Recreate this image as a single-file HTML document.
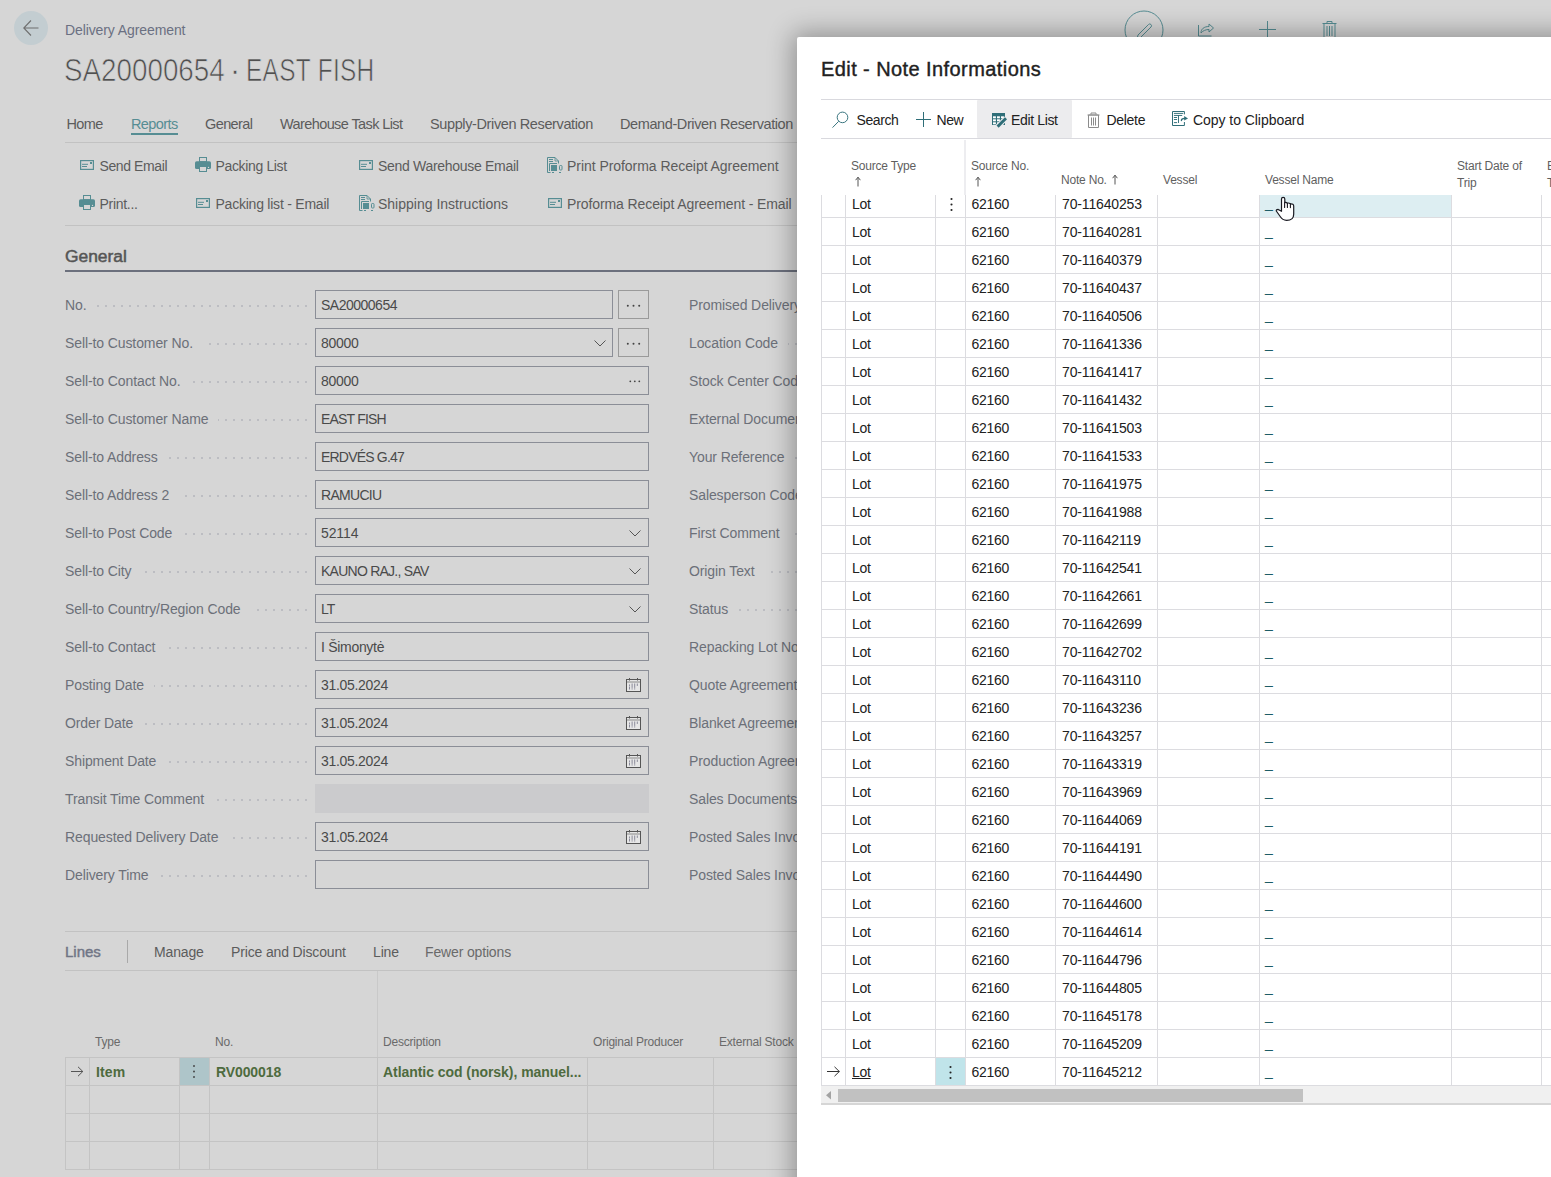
<!DOCTYPE html>
<html><head><meta charset="utf-8"><style>
html,body{margin:0;padding:0;width:1551px;height:1177px;overflow:hidden;background:#d6d6d6;font-family:"Liberation Sans",sans-serif;}
.t{position:absolute;white-space:nowrap;}
.r{position:absolute;}
.dots{background-image:radial-gradient(circle, #bcbdc2 0.8px, transparent 1.05px);background-size:8px 2px;background-position:right 0;background-repeat:repeat-x;}
.dlg{position:absolute;left:797px;top:37px;width:800px;height:1200px;background:#fff;border-radius:2px;box-shadow:0 0 26px 4px rgba(0,0,0,0.33);}
</style></head><body>
<div class="r" style="left:14px;top:11px;width:34px;height:34px;border-radius:50%;background:#c3cdd1"></div>
<svg class="r" style="left:22px;top:19px" width="18" height="18" viewBox="0 0 18 18"><path d="M9 1.5 L1.8 9 L9 16.5 M1.8 9 H16.5" fill="none" stroke="#6f6f6f" stroke-width="1.1"/></svg>
<div class="t" style="left:65px;top:23.35px;font-size:14px;line-height:14px;color:#6b7082;font-weight:normal;letter-spacing:-0.1px;">Delivery Agreement</div>
<div class="t" style="left:64.2px;top:55.18px;font-size:30.5px;line-height:30.5px;color:#505050;font-weight:normal;letter-spacing:0px;transform-origin:0 0;transform:scaleX(0.911);-webkit-text-stroke:0.7px #d6d6d6;">SA20000654</div>
<div class="t" style="left:230px;top:55.18px;font-size:30.5px;line-height:30.5px;color:#505050;font-weight:normal;letter-spacing:0px;-webkit-text-stroke:0.5px #d6d6d6;">·</div>
<div class="t" style="left:245.8px;top:55.18px;font-size:30.5px;line-height:30.5px;color:#505050;font-weight:normal;letter-spacing:0.4px;transform-origin:0 0;transform:scaleX(0.80);-webkit-text-stroke:0.7px #d6d6d6;">EAST FISH</div>
<div class="t" style="left:66.5px;top:116.93px;font-size:14.5px;line-height:14.5px;color:#5c5c5c;font-weight:normal;letter-spacing:-0.6px;">Home</div>
<div class="t" style="left:131px;top:116.93px;font-size:14.5px;line-height:14.5px;color:#568d93;font-weight:normal;letter-spacing:-0.6px;">Reports</div>
<div class="t" style="left:205px;top:116.93px;font-size:14.5px;line-height:14.5px;color:#5c5c5c;font-weight:normal;letter-spacing:-0.6px;">General</div>
<div class="t" style="left:280px;top:116.93px;font-size:14.5px;line-height:14.5px;color:#5c5c5c;font-weight:normal;letter-spacing:-0.6px;">Warehouse Task List</div>
<div class="t" style="left:430px;top:116.93px;font-size:14.5px;line-height:14.5px;color:#5c5c5c;font-weight:normal;letter-spacing:-0.38px;">Supply-Driven Reservation</div>
<div class="t" style="left:620px;top:116.93px;font-size:14.5px;line-height:14.5px;color:#5c5c5c;font-weight:normal;letter-spacing:-0.4px;">Demand-Driven Reservation</div>
<div class="r" style="left:131px;top:133px;width:47px;height:2px;background:#568d93"></div>
<div class="r" style="left:65px;top:142px;width:740px;height:1px;background:#c2c2c2"></div>
<svg class="r" style="left:80px;top:160px" width="14" height="10" viewBox="0 0 14 10"><rect x="0.6" y="0.6" width="12.8" height="8.8" fill="none" stroke="#568d93" stroke-width="1.2"/><path d="M2 4.3h6M2 6.5h5" stroke="#568d93" stroke-width="1"/><rect x="10" y="2" width="2" height="2" fill="#568d93"/></svg>
<div class="t" style="left:99.5px;top:159.15px;font-size:14px;line-height:14px;color:#5c5c5c;font-weight:normal;letter-spacing:-0.4px;">Send Email</div>
<svg class="r" style="left:195px;top:157px" width="16" height="15" viewBox="0 0 16 15"><rect x="4.5" y="0.5" width="7" height="4.2" fill="none" stroke="#568d93"/><rect x="0" y="4.2" width="16" height="7.8" rx="1.6" fill="#568d93"/><rect x="4.5" y="9.5" width="7" height="5" fill="#d6d6d6" stroke="#568d93"/><circle cx="13.5" cy="10.4" r="0.7" fill="#d6d6d6"/></svg>
<div class="t" style="left:215.5px;top:159.15px;font-size:14px;line-height:14px;color:#5c5c5c;font-weight:normal;letter-spacing:-0.35px;">Packing List</div>
<svg class="r" style="left:359px;top:160px" width="14" height="10" viewBox="0 0 14 10"><rect x="0.6" y="0.6" width="12.8" height="8.8" fill="none" stroke="#568d93" stroke-width="1.2"/><path d="M2 4.3h6M2 6.5h5" stroke="#568d93" stroke-width="1"/><rect x="10" y="2" width="2" height="2" fill="#568d93"/></svg>
<div class="t" style="left:378px;top:159.15px;font-size:14px;line-height:14px;color:#5c5c5c;font-weight:normal;letter-spacing:-0.3px;">Send Warehouse Email</div>
<svg class="r" style="left:547px;top:157px" width="16" height="16" viewBox="0 0 16 16"><path d="M3.5 15.5H0.5V0.5H8L11.5 4V6.5" fill="none" stroke="#568d93"/><path d="M8 0.5V4H11.5" fill="none" stroke="#568d93" stroke-width="0.8"/><path d="M2 2.5h4M2 4.5h4" stroke="#568d93"/><path d="M2.5 14V6.5H10" fill="none" stroke="#568d93"/><rect x="4" y="8" width="6" height="6" fill="#568d93"/><rect x="12.5" y="8.5" width="2.5" height="4.5" rx="0.8" fill="none" stroke="#568d93"/><path d="M5 15.5h2M12 15.5h2" stroke="#568d93"/></svg>
<div class="t" style="left:567px;top:159.15px;font-size:14px;line-height:14px;color:#5c5c5c;font-weight:normal;letter-spacing:-0.05px;">Print Proforma Receipt Agreement</div>
<svg class="r" style="left:79px;top:195px" width="16" height="15" viewBox="0 0 16 15"><rect x="4.5" y="0.5" width="7" height="4.2" fill="none" stroke="#568d93"/><rect x="0" y="4.2" width="16" height="7.8" rx="1.6" fill="#568d93"/><rect x="4.5" y="9.5" width="7" height="5" fill="#d6d6d6" stroke="#568d93"/><circle cx="13.5" cy="10.4" r="0.7" fill="#d6d6d6"/></svg>
<div class="t" style="left:99.5px;top:196.95px;font-size:14px;line-height:14px;color:#5c5c5c;font-weight:normal;letter-spacing:-0.3px;">Print...</div>
<svg class="r" style="left:196px;top:198px" width="14" height="10" viewBox="0 0 14 10"><rect x="0.6" y="0.6" width="12.8" height="8.8" fill="none" stroke="#568d93" stroke-width="1.2"/><path d="M2 4.3h6M2 6.5h5" stroke="#568d93" stroke-width="1"/><rect x="10" y="2" width="2" height="2" fill="#568d93"/></svg>
<div class="t" style="left:215.5px;top:196.95px;font-size:14px;line-height:14px;color:#5c5c5c;font-weight:normal;letter-spacing:-0.23px;">Packing list - Email</div>
<svg class="r" style="left:359px;top:195px" width="16" height="16" viewBox="0 0 16 16"><path d="M3.5 15.5H0.5V0.5H8L11.5 4V6.5" fill="none" stroke="#568d93"/><path d="M8 0.5V4H11.5" fill="none" stroke="#568d93" stroke-width="0.8"/><path d="M2 2.5h4M2 4.5h4" stroke="#568d93"/><path d="M2.5 14V6.5H10" fill="none" stroke="#568d93"/><rect x="4" y="8" width="6" height="6" fill="#568d93"/><rect x="12.5" y="8.5" width="2.5" height="4.5" rx="0.8" fill="none" stroke="#568d93"/><path d="M5 15.5h2M12 15.5h2" stroke="#568d93"/></svg>
<div class="t" style="left:378px;top:196.95px;font-size:14px;line-height:14px;color:#5c5c5c;font-weight:normal;letter-spacing:0px;">Shipping Instructions</div>
<svg class="r" style="left:548px;top:198px" width="14" height="10" viewBox="0 0 14 10"><rect x="0.6" y="0.6" width="12.8" height="8.8" fill="none" stroke="#568d93" stroke-width="1.2"/><path d="M2 4.3h6M2 6.5h5" stroke="#568d93" stroke-width="1"/><rect x="10" y="2" width="2" height="2" fill="#568d93"/></svg>
<div class="t" style="left:567px;top:196.95px;font-size:14px;line-height:14px;color:#5c5c5c;font-weight:normal;letter-spacing:-0.1px;">Proforma Receipt Agreement - Email</div>
<div class="r" style="left:65px;top:225px;width:740px;height:1px;background:#c2c2c2"></div>
<div class="t" style="left:65px;top:248.27px;font-size:17.4px;line-height:17.4px;color:#555;font-weight:normal;letter-spacing:0px;-webkit-text-stroke:0.5px #555;">General</div>
<div class="r" style="left:65px;top:270px;width:740px;height:2px;background:#6c707d"></div>
<div class="r dots" style="left:97px;top:305px;width:213px;height:2px"></div>
<div class="t" style="left:65px;top:297.75px;font-size:14px;line-height:14px;color:#6c7079;font-weight:normal;letter-spacing:-0.1px;background:#d6d6d6;padding-right:10px;">No.</div>
<div class="r" style="left:315px;top:290px;width:298px;height:29px;border:1px solid #8b8e97;box-sizing:border-box"></div>
<div class="t" style="left:321px;top:297.95px;font-size:14px;line-height:14px;color:#4a4a4a;font-weight:normal;letter-spacing:-0.5px;">SA20000654</div>
<div class="r" style="left:618px;top:290px;width:31px;height:29px;border:1px solid #9a9a9a;box-sizing:border-box"></div>
<svg class="r" style="left:626px;top:303.5px" width="15" height="4"><circle cx="1.8" cy="1.8" r="1" fill="#444"/><circle cx="7.5" cy="1.8" r="1" fill="#444"/><circle cx="13.2" cy="1.8" r="1" fill="#444"/></svg>
<div class="r dots" style="left:700px;top:305px;width:100px;height:2px;background-position:4px 0"></div>
<div class="t" style="left:689px;top:297.75px;font-size:14px;line-height:14px;color:#6c7079;font-weight:normal;letter-spacing:-0.1px;background:#d6d6d6;padding-right:10px;">Promised Delivery Date</div>
<div class="r dots" style="left:97px;top:343px;width:213px;height:2px"></div>
<div class="t" style="left:65px;top:335.75px;font-size:14px;line-height:14px;color:#6c7079;font-weight:normal;letter-spacing:-0.1px;background:#d6d6d6;padding-right:10px;">Sell-to Customer No.</div>
<div class="r" style="left:315px;top:328px;width:298px;height:29px;border:1px solid #8b8e97;box-sizing:border-box"></div>
<div class="t" style="left:321px;top:335.95px;font-size:14px;line-height:14px;color:#4a4a4a;font-weight:normal;letter-spacing:-0.3px;">80000</div>
<div class="r" style="left:618px;top:328px;width:31px;height:29px;border:1px solid #9a9a9a;box-sizing:border-box"></div>
<svg class="r" style="left:626px;top:341.5px" width="15" height="4"><circle cx="1.8" cy="1.8" r="1" fill="#444"/><circle cx="7.5" cy="1.8" r="1" fill="#444"/><circle cx="13.2" cy="1.8" r="1" fill="#444"/></svg>
<svg class="r" style="left:594px;top:340px" width="13" height="8"><path d="M0.5 0.5 L6 6 L11.5 0.5" fill="none" stroke="#555" stroke-width="1"/></svg>
<div class="r dots" style="left:700px;top:343px;width:100px;height:2px;background-position:4px 0"></div>
<div class="t" style="left:689px;top:335.75px;font-size:14px;line-height:14px;color:#6c7079;font-weight:normal;letter-spacing:-0.1px;background:#d6d6d6;padding-right:10px;">Location Code</div>
<div class="r dots" style="left:97px;top:381px;width:213px;height:2px"></div>
<div class="t" style="left:65px;top:373.75px;font-size:14px;line-height:14px;color:#6c7079;font-weight:normal;letter-spacing:-0.1px;background:#d6d6d6;padding-right:10px;">Sell-to Contact No.</div>
<div class="r" style="left:315px;top:366px;width:334px;height:29px;border:1px solid #8b8e97;box-sizing:border-box"></div>
<div class="t" style="left:321px;top:373.95px;font-size:14px;line-height:14px;color:#4a4a4a;font-weight:normal;letter-spacing:-0.3px;">80000</div>
<svg class="r" style="left:629px;top:380px" width="12" height="3"><circle cx="1.3" cy="1.3" r="0.9" fill="#444"/><circle cx="5.8" cy="1.3" r="0.9" fill="#444"/><circle cx="10.3" cy="1.3" r="0.9" fill="#444"/></svg>
<div class="r dots" style="left:700px;top:381px;width:100px;height:2px;background-position:4px 0"></div>
<div class="t" style="left:689px;top:373.75px;font-size:14px;line-height:14px;color:#6c7079;font-weight:normal;letter-spacing:-0.1px;background:#d6d6d6;padding-right:10px;">Stock Center Code</div>
<div class="r dots" style="left:97px;top:419px;width:213px;height:2px"></div>
<div class="t" style="left:65px;top:411.75px;font-size:14px;line-height:14px;color:#6c7079;font-weight:normal;letter-spacing:-0.1px;background:#d6d6d6;padding-right:10px;">Sell-to Customer Name</div>
<div class="r" style="left:315px;top:404px;width:334px;height:29px;border:1px solid #8b8e97;box-sizing:border-box"></div>
<div class="t" style="left:321px;top:411.95px;font-size:14px;line-height:14px;color:#4a4a4a;font-weight:normal;letter-spacing:-0.8px;">EAST FISH</div>
<div class="r dots" style="left:700px;top:419px;width:100px;height:2px;background-position:4px 0"></div>
<div class="t" style="left:689px;top:411.75px;font-size:14px;line-height:14px;color:#6c7079;font-weight:normal;letter-spacing:-0.1px;background:#d6d6d6;padding-right:10px;">External Document No.</div>
<div class="r dots" style="left:97px;top:457px;width:213px;height:2px"></div>
<div class="t" style="left:65px;top:449.75px;font-size:14px;line-height:14px;color:#6c7079;font-weight:normal;letter-spacing:-0.1px;background:#d6d6d6;padding-right:10px;">Sell-to Address</div>
<div class="r" style="left:315px;top:442px;width:334px;height:29px;border:1px solid #8b8e97;box-sizing:border-box"></div>
<div class="t" style="left:321px;top:449.95px;font-size:14px;line-height:14px;color:#4a4a4a;font-weight:normal;letter-spacing:-0.8px;">ERDVÉS G.47</div>
<div class="r dots" style="left:700px;top:457px;width:100px;height:2px;background-position:4px 0"></div>
<div class="t" style="left:689px;top:449.75px;font-size:14px;line-height:14px;color:#6c7079;font-weight:normal;letter-spacing:-0.1px;background:#d6d6d6;padding-right:10px;">Your Reference</div>
<div class="r dots" style="left:97px;top:495px;width:213px;height:2px"></div>
<div class="t" style="left:65px;top:487.75px;font-size:14px;line-height:14px;color:#6c7079;font-weight:normal;letter-spacing:-0.1px;background:#d6d6d6;padding-right:10px;">Sell-to Address 2</div>
<div class="r" style="left:315px;top:480px;width:334px;height:29px;border:1px solid #8b8e97;box-sizing:border-box"></div>
<div class="t" style="left:321px;top:487.95px;font-size:14px;line-height:14px;color:#4a4a4a;font-weight:normal;letter-spacing:-0.7px;">RAMUCIU</div>
<div class="r dots" style="left:700px;top:495px;width:100px;height:2px;background-position:4px 0"></div>
<div class="t" style="left:689px;top:487.75px;font-size:14px;line-height:14px;color:#6c7079;font-weight:normal;letter-spacing:-0.1px;background:#d6d6d6;padding-right:10px;">Salesperson Code</div>
<div class="r dots" style="left:97px;top:533px;width:213px;height:2px"></div>
<div class="t" style="left:65px;top:525.75px;font-size:14px;line-height:14px;color:#6c7079;font-weight:normal;letter-spacing:-0.1px;background:#d6d6d6;padding-right:10px;">Sell-to Post Code</div>
<div class="r" style="left:315px;top:518px;width:334px;height:29px;border:1px solid #8b8e97;box-sizing:border-box"></div>
<div class="t" style="left:321px;top:525.95px;font-size:14px;line-height:14px;color:#4a4a4a;font-weight:normal;letter-spacing:-0.1px;">52114</div>
<svg class="r" style="left:629px;top:530px" width="13" height="8"><path d="M0.5 0.5 L6 6 L11.5 0.5" fill="none" stroke="#555" stroke-width="1"/></svg>
<div class="r dots" style="left:700px;top:533px;width:100px;height:2px;background-position:4px 0"></div>
<div class="t" style="left:689px;top:525.75px;font-size:14px;line-height:14px;color:#6c7079;font-weight:normal;letter-spacing:-0.1px;background:#d6d6d6;padding-right:10px;">First Comment</div>
<div class="r dots" style="left:97px;top:571px;width:213px;height:2px"></div>
<div class="t" style="left:65px;top:563.75px;font-size:14px;line-height:14px;color:#6c7079;font-weight:normal;letter-spacing:-0.1px;background:#d6d6d6;padding-right:10px;">Sell-to City</div>
<div class="r" style="left:315px;top:556px;width:334px;height:29px;border:1px solid #8b8e97;box-sizing:border-box"></div>
<div class="t" style="left:321px;top:563.95px;font-size:14px;line-height:14px;color:#4a4a4a;font-weight:normal;letter-spacing:-0.75px;">KAUNO RAJ., SAV</div>
<svg class="r" style="left:629px;top:568px" width="13" height="8"><path d="M0.5 0.5 L6 6 L11.5 0.5" fill="none" stroke="#555" stroke-width="1"/></svg>
<div class="r dots" style="left:700px;top:571px;width:100px;height:2px;background-position:4px 0"></div>
<div class="t" style="left:689px;top:563.75px;font-size:14px;line-height:14px;color:#6c7079;font-weight:normal;letter-spacing:-0.1px;background:#d6d6d6;padding-right:10px;">Origin Text</div>
<div class="r dots" style="left:97px;top:609px;width:213px;height:2px"></div>
<div class="t" style="left:65px;top:601.75px;font-size:14px;line-height:14px;color:#6c7079;font-weight:normal;letter-spacing:-0.1px;background:#d6d6d6;padding-right:10px;">Sell-to Country/Region Code</div>
<div class="r" style="left:315px;top:594px;width:334px;height:29px;border:1px solid #8b8e97;box-sizing:border-box"></div>
<div class="t" style="left:321px;top:601.95px;font-size:14px;line-height:14px;color:#4a4a4a;font-weight:normal;letter-spacing:-1.0px;">LT</div>
<svg class="r" style="left:629px;top:606px" width="13" height="8"><path d="M0.5 0.5 L6 6 L11.5 0.5" fill="none" stroke="#555" stroke-width="1"/></svg>
<div class="r dots" style="left:700px;top:609px;width:100px;height:2px;background-position:4px 0"></div>
<div class="t" style="left:689px;top:601.75px;font-size:14px;line-height:14px;color:#6c7079;font-weight:normal;letter-spacing:-0.1px;background:#d6d6d6;padding-right:10px;">Status</div>
<div class="r dots" style="left:97px;top:647px;width:213px;height:2px"></div>
<div class="t" style="left:65px;top:639.75px;font-size:14px;line-height:14px;color:#6c7079;font-weight:normal;letter-spacing:-0.1px;background:#d6d6d6;padding-right:10px;">Sell-to Contact</div>
<div class="r" style="left:315px;top:632px;width:334px;height:29px;border:1px solid #8b8e97;box-sizing:border-box"></div>
<div class="t" style="left:321px;top:639.95px;font-size:14px;line-height:14px;color:#4a4a4a;font-weight:normal;letter-spacing:-0.3px;">I Šimonytė</div>
<div class="r dots" style="left:700px;top:647px;width:100px;height:2px;background-position:4px 0"></div>
<div class="t" style="left:689px;top:639.75px;font-size:14px;line-height:14px;color:#6c7079;font-weight:normal;letter-spacing:-0.1px;background:#d6d6d6;padding-right:10px;">Repacking Lot No.</div>
<div class="r dots" style="left:97px;top:685px;width:213px;height:2px"></div>
<div class="t" style="left:65px;top:677.75px;font-size:14px;line-height:14px;color:#6c7079;font-weight:normal;letter-spacing:-0.1px;background:#d6d6d6;padding-right:10px;">Posting Date</div>
<div class="r" style="left:315px;top:670px;width:334px;height:29px;border:1px solid #8b8e97;box-sizing:border-box"></div>
<div class="t" style="left:321px;top:677.95px;font-size:14px;line-height:14px;color:#4a4a4a;font-weight:normal;letter-spacing:-0.3px;">31.05.2024</div>
<svg class="r" style="left:626px;top:678px" width="15" height="14" viewBox="0 0 15 14"><rect x="0.5" y="1.5" width="14" height="12" fill="#e6e6e6" stroke="#555"/><path d="M1 4h13" stroke="#999" stroke-width="1.2"/><path d="M3.5 0v2.5M11.5 0v2.5" stroke="#555"/><g fill="#8a8a9a"><rect x="3" y="6.5" width="1" height="1.4"/><rect x="5.6" y="5.5" width="1" height="4.4"/><rect x="8.2" y="5.5" width="1" height="4.4"/><rect x="10.8" y="5.5" width="1" height="2.4"/><rect x="3" y="8.5" width="1" height="3"/><rect x="5.6" y="10.3" width="1" height="1.2"/><rect x="8.2" y="10.3" width="1" height="1.2"/></g></svg>
<div class="r dots" style="left:700px;top:685px;width:100px;height:2px;background-position:4px 0"></div>
<div class="t" style="left:689px;top:677.75px;font-size:14px;line-height:14px;color:#6c7079;font-weight:normal;letter-spacing:-0.1px;background:#d6d6d6;padding-right:10px;">Quote Agreement No.</div>
<div class="r dots" style="left:97px;top:723px;width:213px;height:2px"></div>
<div class="t" style="left:65px;top:715.75px;font-size:14px;line-height:14px;color:#6c7079;font-weight:normal;letter-spacing:-0.1px;background:#d6d6d6;padding-right:10px;">Order Date</div>
<div class="r" style="left:315px;top:708px;width:334px;height:29px;border:1px solid #8b8e97;box-sizing:border-box"></div>
<div class="t" style="left:321px;top:715.95px;font-size:14px;line-height:14px;color:#4a4a4a;font-weight:normal;letter-spacing:-0.3px;">31.05.2024</div>
<svg class="r" style="left:626px;top:716px" width="15" height="14" viewBox="0 0 15 14"><rect x="0.5" y="1.5" width="14" height="12" fill="#e6e6e6" stroke="#555"/><path d="M1 4h13" stroke="#999" stroke-width="1.2"/><path d="M3.5 0v2.5M11.5 0v2.5" stroke="#555"/><g fill="#8a8a9a"><rect x="3" y="6.5" width="1" height="1.4"/><rect x="5.6" y="5.5" width="1" height="4.4"/><rect x="8.2" y="5.5" width="1" height="4.4"/><rect x="10.8" y="5.5" width="1" height="2.4"/><rect x="3" y="8.5" width="1" height="3"/><rect x="5.6" y="10.3" width="1" height="1.2"/><rect x="8.2" y="10.3" width="1" height="1.2"/></g></svg>
<div class="r dots" style="left:700px;top:723px;width:100px;height:2px;background-position:4px 0"></div>
<div class="t" style="left:689px;top:715.75px;font-size:14px;line-height:14px;color:#6c7079;font-weight:normal;letter-spacing:-0.1px;background:#d6d6d6;padding-right:10px;">Blanket Agreement No.</div>
<div class="r dots" style="left:97px;top:761px;width:213px;height:2px"></div>
<div class="t" style="left:65px;top:753.75px;font-size:14px;line-height:14px;color:#6c7079;font-weight:normal;letter-spacing:-0.1px;background:#d6d6d6;padding-right:10px;">Shipment Date</div>
<div class="r" style="left:315px;top:746px;width:334px;height:29px;border:1px solid #8b8e97;box-sizing:border-box"></div>
<div class="t" style="left:321px;top:753.95px;font-size:14px;line-height:14px;color:#4a4a4a;font-weight:normal;letter-spacing:-0.3px;">31.05.2024</div>
<svg class="r" style="left:626px;top:754px" width="15" height="14" viewBox="0 0 15 14"><rect x="0.5" y="1.5" width="14" height="12" fill="#e6e6e6" stroke="#555"/><path d="M1 4h13" stroke="#999" stroke-width="1.2"/><path d="M3.5 0v2.5M11.5 0v2.5" stroke="#555"/><g fill="#8a8a9a"><rect x="3" y="6.5" width="1" height="1.4"/><rect x="5.6" y="5.5" width="1" height="4.4"/><rect x="8.2" y="5.5" width="1" height="4.4"/><rect x="10.8" y="5.5" width="1" height="2.4"/><rect x="3" y="8.5" width="1" height="3"/><rect x="5.6" y="10.3" width="1" height="1.2"/><rect x="8.2" y="10.3" width="1" height="1.2"/></g></svg>
<div class="r dots" style="left:700px;top:761px;width:100px;height:2px;background-position:4px 0"></div>
<div class="t" style="left:689px;top:753.75px;font-size:14px;line-height:14px;color:#6c7079;font-weight:normal;letter-spacing:-0.1px;background:#d6d6d6;padding-right:10px;">Production Agreement No.</div>
<div class="r dots" style="left:97px;top:799px;width:213px;height:2px"></div>
<div class="t" style="left:65px;top:791.75px;font-size:14px;line-height:14px;color:#6c7079;font-weight:normal;letter-spacing:-0.1px;background:#d6d6d6;padding-right:10px;">Transit Time Comment</div>
<div class="r" style="left:315px;top:784px;width:334px;height:29px;background:#cbcbcd"></div>
<div class="r dots" style="left:700px;top:799px;width:100px;height:2px;background-position:4px 0"></div>
<div class="t" style="left:689px;top:791.75px;font-size:14px;line-height:14px;color:#6c7079;font-weight:normal;letter-spacing:-0.1px;background:#d6d6d6;padding-right:10px;">Sales Documents</div>
<div class="r dots" style="left:97px;top:837px;width:213px;height:2px"></div>
<div class="t" style="left:65px;top:829.75px;font-size:14px;line-height:14px;color:#6c7079;font-weight:normal;letter-spacing:-0.1px;background:#d6d6d6;padding-right:10px;">Requested Delivery Date</div>
<div class="r" style="left:315px;top:822px;width:334px;height:29px;border:1px solid #8b8e97;box-sizing:border-box"></div>
<div class="t" style="left:321px;top:829.95px;font-size:14px;line-height:14px;color:#4a4a4a;font-weight:normal;letter-spacing:-0.3px;">31.05.2024</div>
<svg class="r" style="left:626px;top:830px" width="15" height="14" viewBox="0 0 15 14"><rect x="0.5" y="1.5" width="14" height="12" fill="#e6e6e6" stroke="#555"/><path d="M1 4h13" stroke="#999" stroke-width="1.2"/><path d="M3.5 0v2.5M11.5 0v2.5" stroke="#555"/><g fill="#8a8a9a"><rect x="3" y="6.5" width="1" height="1.4"/><rect x="5.6" y="5.5" width="1" height="4.4"/><rect x="8.2" y="5.5" width="1" height="4.4"/><rect x="10.8" y="5.5" width="1" height="2.4"/><rect x="3" y="8.5" width="1" height="3"/><rect x="5.6" y="10.3" width="1" height="1.2"/><rect x="8.2" y="10.3" width="1" height="1.2"/></g></svg>
<div class="r dots" style="left:700px;top:837px;width:100px;height:2px;background-position:4px 0"></div>
<div class="t" style="left:689px;top:829.75px;font-size:14px;line-height:14px;color:#6c7079;font-weight:normal;letter-spacing:-0.1px;background:#d6d6d6;padding-right:10px;">Posted Sales Invoices</div>
<div class="r dots" style="left:97px;top:875px;width:213px;height:2px"></div>
<div class="t" style="left:65px;top:867.75px;font-size:14px;line-height:14px;color:#6c7079;font-weight:normal;letter-spacing:-0.1px;background:#d6d6d6;padding-right:10px;">Delivery Time</div>
<div class="r" style="left:315px;top:860px;width:334px;height:29px;border:1px solid #8b8e97;box-sizing:border-box"></div>
<div class="t" style="left:321px;top:867.95px;font-size:14px;line-height:14px;color:#4a4a4a;font-weight:normal;letter-spacing:-0.3px;"></div>
<div class="r dots" style="left:700px;top:875px;width:100px;height:2px;background-position:4px 0"></div>
<div class="t" style="left:689px;top:867.75px;font-size:14px;line-height:14px;color:#6c7079;font-weight:normal;letter-spacing:-0.1px;background:#d6d6d6;padding-right:10px;">Posted Sales Invoice No.</div>
<div class="r" style="left:65px;top:931px;width:740px;height:1px;background:#c2c2c2"></div>
<div class="t" style="left:65px;top:944.10px;font-size:15px;line-height:15px;color:#707585;font-weight:normal;letter-spacing:0px;-webkit-text-stroke:0.45px #707585;">Lines</div>
<div class="r" style="left:127px;top:940px;width:1px;height:23px;background:#a9a9a9"></div>
<div class="t" style="left:154px;top:945.15px;font-size:14px;line-height:14px;color:#5c5c5c;font-weight:normal;letter-spacing:-0.15px;">Manage</div>
<div class="t" style="left:231px;top:945.15px;font-size:14px;line-height:14px;color:#5c5c5c;font-weight:normal;letter-spacing:-0.15px;">Price and Discount</div>
<div class="t" style="left:373px;top:945.15px;font-size:14px;line-height:14px;color:#5c5c5c;font-weight:normal;letter-spacing:-0.15px;">Line</div>
<div class="t" style="left:425px;top:945.15px;font-size:14px;line-height:14px;color:#6a6a6a;font-weight:normal;letter-spacing:-0.15px;">Fewer options</div>
<div class="r" style="left:65px;top:970px;width:740px;height:1px;background:#c2c2c2"></div>
<div class="r" style="left:377px;top:971px;width:1px;height:86px;background:#c9c9c9"></div>
<div class="t" style="left:95px;top:1035.54px;font-size:12px;line-height:12px;color:#6a6a6a;font-weight:normal;letter-spacing:-0.2px;">Type</div>
<div class="t" style="left:215px;top:1035.54px;font-size:12px;line-height:12px;color:#6a6a6a;font-weight:normal;letter-spacing:-0.2px;">No.</div>
<div class="t" style="left:383px;top:1035.54px;font-size:12px;line-height:12px;color:#6a6a6a;font-weight:normal;letter-spacing:-0.2px;">Description</div>
<div class="t" style="left:593px;top:1035.54px;font-size:12px;line-height:12px;color:#6a6a6a;font-weight:normal;letter-spacing:-0.2px;">Original Producer</div>
<div class="t" style="left:719px;top:1035.54px;font-size:12px;line-height:12px;color:#6a6a6a;font-weight:normal;letter-spacing:-0.2px;">External Stock</div>
<div class="r" style="left:65px;top:1057px;width:740px;height:1px;background:#c4c4c4"></div>
<div class="r" style="left:65px;top:1085px;width:740px;height:1px;background:#c4c4c4"></div>
<div class="r" style="left:65px;top:1113px;width:740px;height:1px;background:#c4c4c4"></div>
<div class="r" style="left:65px;top:1141px;width:740px;height:1px;background:#c4c4c4"></div>
<div class="r" style="left:65px;top:1169px;width:740px;height:1px;background:#c4c4c4"></div>
<div class="r" style="left:65px;top:1057px;width:1px;height:113px;background:#c4c4c4"></div>
<div class="r" style="left:89px;top:1057px;width:1px;height:113px;background:#c4c4c4"></div>
<div class="r" style="left:179px;top:1057px;width:1px;height:113px;background:#c4c4c4"></div>
<div class="r" style="left:209px;top:1057px;width:1px;height:113px;background:#c4c4c4"></div>
<div class="r" style="left:377px;top:1057px;width:1px;height:113px;background:#c4c4c4"></div>
<div class="r" style="left:587px;top:1057px;width:1px;height:113px;background:#c4c4c4"></div>
<div class="r" style="left:713px;top:1057px;width:1px;height:113px;background:#c4c4c4"></div>
<div class="r" style="left:180px;top:1058px;width:29px;height:27px;background:#aec5c9"></div>
<svg class="r" style="left:71px;top:1066px" width="13" height="11"><path d="M0 5.5h12M7 0.8l4.8 4.7L7 10.2" fill="none" stroke="#555" stroke-width="1"/></svg>
<div class="t" style="left:96px;top:1065.15px;font-size:14px;line-height:14px;color:#4e6b3e;font-weight:bold;letter-spacing:0.15px;">Item</div>
<svg class="r" style="left:192px;top:1064px" width="4" height="15"><circle cx="2" cy="2" r="0.95" fill="#444"/><circle cx="2" cy="7.5" r="0.95" fill="#444"/><circle cx="2" cy="13" r="0.95" fill="#444"/></svg>
<div class="t" style="left:216px;top:1065.15px;font-size:14px;line-height:14px;color:#4e6b3e;font-weight:bold;letter-spacing:-0.1px;">RV000018</div>
<div class="t" style="left:383px;top:1065.15px;font-size:14px;line-height:14px;color:#4e6b3e;font-weight:bold;letter-spacing:-0.05px;">Atlantic cod (norsk), manuel...</div>
<svg class="r" style="left:1124px;top:10px" width="40" height="40"><circle cx="20" cy="20" r="19" fill="none" stroke="#568d93" stroke-width="1"/><path d="M13 29 L14 25 L24.5 14.5 a1.5 1.5 0 0 1 2.5 2.5 L16.5 27.5 Z" fill="none" stroke="#568d93"/></svg>
<svg class="r" style="left:1197px;top:21px" width="18" height="16"><path d="M1.5 4v11h13" fill="none" stroke="#568d93"/><path d="M4 12c0-4 3-6.5 8-6.5V3l4.5 4-4.5 4V8.5c-3 0-6 1-8 3.5z" fill="none" stroke="#568d93"/></svg>
<div class="r" style="left:1259px;top:29px;width:17px;height:1.2px;background:#568d93"></div>
<div class="r" style="left:1267px;top:21px;width:1.2px;height:17px;background:#568d93"></div>
<svg class="r" style="left:1322px;top:21px" width="15" height="17"><path d="M0.5 2.5h14M5 2.5V0.5h5v2M2 2.5v14h11v-14M5 5v10M7.5 5v10M10 5v10" fill="none" stroke="#568d93"/></svg>
<div class="dlg"></div>
<div class="t" style="left:821px;top:59.27px;font-size:20px;line-height:20px;color:#212121;font-weight:normal;letter-spacing:0.42px;-webkit-text-stroke:0.4px #212121;">Edit - Note Informations</div>
<div class="r" style="left:821px;top:99px;width:730px;height:1px;background:#d9d9de"></div>
<div class="r" style="left:977px;top:100px;width:95px;height:38px;background:#ececee;border-radius:1px"></div>
<div class="r" style="left:821px;top:138px;width:730px;height:1px;background:#d9d9de"></div>
<svg class="r" style="left:831px;top:111px" width="18" height="18"><circle cx="11.5" cy="6.4" r="5.3" fill="none" stroke="#2f6e78" stroke-width="0.95"/><path d="M7.7 10.3L1.5 16.6" stroke="#2f6e78" stroke-width="0.95"/></svg>
<div class="t" style="left:856.5px;top:113.05px;font-size:14px;line-height:14px;color:#212121;font-weight:normal;letter-spacing:-0.4px;">Search</div>
<div class="r" style="left:916px;top:119px;width:15px;height:1px;background:#2f6e78"></div>
<div class="r" style="left:923px;top:112px;width:1px;height:15px;background:#2f6e78"></div>
<div class="t" style="left:936.5px;top:113.05px;font-size:14px;line-height:14px;color:#212121;font-weight:normal;letter-spacing:-0.4px;">New</div>
<svg class="r" style="left:991px;top:112px" width="17" height="16" viewBox="0 0 17 16"><rect x="1" y="1" width="13" height="12" fill="#2f6e78"/><rect x="2" y="4.3" width="2.9" height="2" fill="#fff"/><rect x="6" y="4.3" width="2.9" height="2" fill="#fff"/><rect x="10" y="4.3" width="2.9" height="2" fill="#fff"/><rect x="2" y="7.3" width="2.9" height="2" fill="#fff"/><rect x="6" y="7.3" width="2.9" height="2" fill="#fff"/><rect x="10" y="7.3" width="2.9" height="2" fill="#fff"/><rect x="2" y="10.3" width="2.9" height="2" fill="#fff"/><rect x="6" y="10.3" width="2.9" height="2" fill="#fff"/><rect x="10" y="10.3" width="2.9" height="2" fill="#fff"/><path d="M6.6 14.6L15 6.2" stroke="#ececee" stroke-width="5"/><path d="M6.6 14.6L15 6.2" stroke="#2f6e78" stroke-width="2.9"/></svg>
<div class="t" style="left:1011px;top:113.05px;font-size:14px;line-height:14px;color:#212121;font-weight:normal;letter-spacing:-0.35px;">Edit List</div>
<svg class="r" style="left:1087px;top:112px" width="13" height="17"><path d="M4 2.5V1h5v1.5M1.5 3h10v12.5h-10zM0.5 3h12M4.5 5.5v8M6.5 5.5v8M8.5 5.5v8" fill="none" stroke="#8c8c8c"/></svg>
<div class="t" style="left:1106.5px;top:113.05px;font-size:14px;line-height:14px;color:#212121;font-weight:normal;letter-spacing:-0.3px;">Delete</div>
<svg class="r" style="left:1171px;top:110px" width="18" height="17"><path d="M13.4 4.4V1.5H1.5V15.5H13.4V12" fill="none" stroke="#2f6e78" stroke-width="1"/><path d="M3.3 3.4H11.8M3.3 5.45H10.8M3.3 7.5H5.7M3.3 9.5H5.7M3.3 12.6H5.7M7.5 5.45V12.6" stroke="#2f6e78" stroke-width="0.95" stroke-linecap="round"/><path d="M10.4 10.6Q10.4 8.4 13.6 8.4" fill="none" stroke="#2f6e78" stroke-width="1.3" stroke-linecap="round"/><path d="M13.2 6.1L17 8.4L13.2 10.6Z" fill="#2f6e78"/></svg>
<div class="t" style="left:1193px;top:113.05px;font-size:14px;line-height:14px;color:#212121;font-weight:normal;letter-spacing:-0.05px;">Copy to Clipboard</div>
<div class="t" style="left:851px;top:159.84px;font-size:12px;line-height:12px;color:#5f5f5f;font-weight:normal;letter-spacing:-0.2px;">Source Type</div>
<svg class="r" style="left:855px;top:175.5px" width="6" height="11"><path d="M3 10.5V1.2M0.6 4.2L3 1.2L5.4 4.2" fill="none" stroke="#555" stroke-width="1"/></svg>
<div class="t" style="left:971px;top:159.84px;font-size:12px;line-height:12px;color:#5f5f5f;font-weight:normal;letter-spacing:-0.2px;">Source No.</div>
<svg class="r" style="left:975px;top:175.5px" width="6" height="11"><path d="M3 10.5V1.2M0.6 4.2L3 1.2L5.4 4.2" fill="none" stroke="#555" stroke-width="1"/></svg>
<div class="t" style="left:1061px;top:173.84px;font-size:12px;line-height:12px;color:#5f5f5f;font-weight:normal;letter-spacing:-0.2px;">Note No.</div>
<svg class="r" style="left:1112px;top:173.5px" width="6" height="11"><path d="M3 10.5V1.2M0.6 4.2L3 1.2L5.4 4.2" fill="none" stroke="#555" stroke-width="1"/></svg>
<div class="t" style="left:1163px;top:173.84px;font-size:12px;line-height:12px;color:#5f5f5f;font-weight:normal;letter-spacing:-0.2px;">Vessel</div>
<div class="t" style="left:1265px;top:173.84px;font-size:12px;line-height:12px;color:#5f5f5f;font-weight:normal;letter-spacing:-0.2px;">Vessel Name</div>
<div class="t" style="left:1457px;top:159.84px;font-size:12px;line-height:12px;color:#5f5f5f;font-weight:normal;letter-spacing:-0.2px;">Start Date of</div>
<div class="t" style="left:1457px;top:176.64px;font-size:12px;line-height:12px;color:#5f5f5f;font-weight:normal;letter-spacing:-0.2px;">Trip</div>
<div class="t" style="left:1547px;top:159.84px;font-size:12px;line-height:12px;color:#5f5f5f;font-weight:normal;letter-spacing:0px;">E</div>
<div class="t" style="left:1547px;top:176.64px;font-size:12px;line-height:12px;color:#5f5f5f;font-weight:normal;letter-spacing:0px;">T</div>
<div class="r" style="left:964px;top:140px;width:2px;height:55px;background:#ededf0"></div>
<div class="r" style="left:1259px;top:195px;width:192px;height:22px;background:#ddeef2"></div>
<div class="r" style="left:936px;top:1058px;width:29px;height:27px;background:#c0e4ea"></div>
<div class="t" style="left:852px;top:197.15px;font-size:14px;line-height:14px;color:#212121;font-weight:normal;letter-spacing:-0.3px;">Lot</div>
<div class="t" style="left:971.5px;top:197.15px;font-size:14px;line-height:14px;color:#212121;font-weight:normal;letter-spacing:-0.3px;">62160</div>
<div class="t" style="left:1062px;top:197.15px;font-size:14px;line-height:14px;color:#212121;font-weight:normal;letter-spacing:-0.15px;">70-11640253</div>
<div class="t" style="left:1265px;top:195.65px;font-size:14px;line-height:14px;color:#1d5c66;font-weight:normal;letter-spacing:0px;">_</div>
<div class="r" style="left:821px;top:217px;width:730px;height:1px;background:#dcdce0"></div>
<div class="t" style="left:852px;top:225.15px;font-size:14px;line-height:14px;color:#212121;font-weight:normal;letter-spacing:-0.3px;">Lot</div>
<div class="t" style="left:971.5px;top:225.15px;font-size:14px;line-height:14px;color:#212121;font-weight:normal;letter-spacing:-0.3px;">62160</div>
<div class="t" style="left:1062px;top:225.15px;font-size:14px;line-height:14px;color:#212121;font-weight:normal;letter-spacing:-0.15px;">70-11640281</div>
<div class="t" style="left:1265px;top:223.65px;font-size:14px;line-height:14px;color:#1d5c66;font-weight:normal;letter-spacing:0px;">_</div>
<div class="r" style="left:821px;top:245px;width:730px;height:1px;background:#dcdce0"></div>
<div class="t" style="left:852px;top:253.15px;font-size:14px;line-height:14px;color:#212121;font-weight:normal;letter-spacing:-0.3px;">Lot</div>
<div class="t" style="left:971.5px;top:253.15px;font-size:14px;line-height:14px;color:#212121;font-weight:normal;letter-spacing:-0.3px;">62160</div>
<div class="t" style="left:1062px;top:253.15px;font-size:14px;line-height:14px;color:#212121;font-weight:normal;letter-spacing:-0.15px;">70-11640379</div>
<div class="t" style="left:1265px;top:251.65px;font-size:14px;line-height:14px;color:#1d5c66;font-weight:normal;letter-spacing:0px;">_</div>
<div class="r" style="left:821px;top:273px;width:730px;height:1px;background:#dcdce0"></div>
<div class="t" style="left:852px;top:281.15px;font-size:14px;line-height:14px;color:#212121;font-weight:normal;letter-spacing:-0.3px;">Lot</div>
<div class="t" style="left:971.5px;top:281.15px;font-size:14px;line-height:14px;color:#212121;font-weight:normal;letter-spacing:-0.3px;">62160</div>
<div class="t" style="left:1062px;top:281.15px;font-size:14px;line-height:14px;color:#212121;font-weight:normal;letter-spacing:-0.15px;">70-11640437</div>
<div class="t" style="left:1265px;top:279.65px;font-size:14px;line-height:14px;color:#1d5c66;font-weight:normal;letter-spacing:0px;">_</div>
<div class="r" style="left:821px;top:301px;width:730px;height:1px;background:#dcdce0"></div>
<div class="t" style="left:852px;top:309.15px;font-size:14px;line-height:14px;color:#212121;font-weight:normal;letter-spacing:-0.3px;">Lot</div>
<div class="t" style="left:971.5px;top:309.15px;font-size:14px;line-height:14px;color:#212121;font-weight:normal;letter-spacing:-0.3px;">62160</div>
<div class="t" style="left:1062px;top:309.15px;font-size:14px;line-height:14px;color:#212121;font-weight:normal;letter-spacing:-0.15px;">70-11640506</div>
<div class="t" style="left:1265px;top:307.65px;font-size:14px;line-height:14px;color:#1d5c66;font-weight:normal;letter-spacing:0px;">_</div>
<div class="r" style="left:821px;top:329px;width:730px;height:1px;background:#dcdce0"></div>
<div class="t" style="left:852px;top:337.15px;font-size:14px;line-height:14px;color:#212121;font-weight:normal;letter-spacing:-0.3px;">Lot</div>
<div class="t" style="left:971.5px;top:337.15px;font-size:14px;line-height:14px;color:#212121;font-weight:normal;letter-spacing:-0.3px;">62160</div>
<div class="t" style="left:1062px;top:337.15px;font-size:14px;line-height:14px;color:#212121;font-weight:normal;letter-spacing:-0.15px;">70-11641336</div>
<div class="t" style="left:1265px;top:335.65px;font-size:14px;line-height:14px;color:#1d5c66;font-weight:normal;letter-spacing:0px;">_</div>
<div class="r" style="left:821px;top:357px;width:730px;height:1px;background:#dcdce0"></div>
<div class="t" style="left:852px;top:365.15px;font-size:14px;line-height:14px;color:#212121;font-weight:normal;letter-spacing:-0.3px;">Lot</div>
<div class="t" style="left:971.5px;top:365.15px;font-size:14px;line-height:14px;color:#212121;font-weight:normal;letter-spacing:-0.3px;">62160</div>
<div class="t" style="left:1062px;top:365.15px;font-size:14px;line-height:14px;color:#212121;font-weight:normal;letter-spacing:-0.15px;">70-11641417</div>
<div class="t" style="left:1265px;top:363.65px;font-size:14px;line-height:14px;color:#1d5c66;font-weight:normal;letter-spacing:0px;">_</div>
<div class="r" style="left:821px;top:385px;width:730px;height:1px;background:#dcdce0"></div>
<div class="t" style="left:852px;top:393.15px;font-size:14px;line-height:14px;color:#212121;font-weight:normal;letter-spacing:-0.3px;">Lot</div>
<div class="t" style="left:971.5px;top:393.15px;font-size:14px;line-height:14px;color:#212121;font-weight:normal;letter-spacing:-0.3px;">62160</div>
<div class="t" style="left:1062px;top:393.15px;font-size:14px;line-height:14px;color:#212121;font-weight:normal;letter-spacing:-0.15px;">70-11641432</div>
<div class="t" style="left:1265px;top:391.65px;font-size:14px;line-height:14px;color:#1d5c66;font-weight:normal;letter-spacing:0px;">_</div>
<div class="r" style="left:821px;top:413px;width:730px;height:1px;background:#dcdce0"></div>
<div class="t" style="left:852px;top:421.15px;font-size:14px;line-height:14px;color:#212121;font-weight:normal;letter-spacing:-0.3px;">Lot</div>
<div class="t" style="left:971.5px;top:421.15px;font-size:14px;line-height:14px;color:#212121;font-weight:normal;letter-spacing:-0.3px;">62160</div>
<div class="t" style="left:1062px;top:421.15px;font-size:14px;line-height:14px;color:#212121;font-weight:normal;letter-spacing:-0.15px;">70-11641503</div>
<div class="t" style="left:1265px;top:419.65px;font-size:14px;line-height:14px;color:#1d5c66;font-weight:normal;letter-spacing:0px;">_</div>
<div class="r" style="left:821px;top:441px;width:730px;height:1px;background:#dcdce0"></div>
<div class="t" style="left:852px;top:449.15px;font-size:14px;line-height:14px;color:#212121;font-weight:normal;letter-spacing:-0.3px;">Lot</div>
<div class="t" style="left:971.5px;top:449.15px;font-size:14px;line-height:14px;color:#212121;font-weight:normal;letter-spacing:-0.3px;">62160</div>
<div class="t" style="left:1062px;top:449.15px;font-size:14px;line-height:14px;color:#212121;font-weight:normal;letter-spacing:-0.15px;">70-11641533</div>
<div class="t" style="left:1265px;top:447.65px;font-size:14px;line-height:14px;color:#1d5c66;font-weight:normal;letter-spacing:0px;">_</div>
<div class="r" style="left:821px;top:469px;width:730px;height:1px;background:#dcdce0"></div>
<div class="t" style="left:852px;top:477.15px;font-size:14px;line-height:14px;color:#212121;font-weight:normal;letter-spacing:-0.3px;">Lot</div>
<div class="t" style="left:971.5px;top:477.15px;font-size:14px;line-height:14px;color:#212121;font-weight:normal;letter-spacing:-0.3px;">62160</div>
<div class="t" style="left:1062px;top:477.15px;font-size:14px;line-height:14px;color:#212121;font-weight:normal;letter-spacing:-0.15px;">70-11641975</div>
<div class="t" style="left:1265px;top:475.65px;font-size:14px;line-height:14px;color:#1d5c66;font-weight:normal;letter-spacing:0px;">_</div>
<div class="r" style="left:821px;top:497px;width:730px;height:1px;background:#dcdce0"></div>
<div class="t" style="left:852px;top:505.15px;font-size:14px;line-height:14px;color:#212121;font-weight:normal;letter-spacing:-0.3px;">Lot</div>
<div class="t" style="left:971.5px;top:505.15px;font-size:14px;line-height:14px;color:#212121;font-weight:normal;letter-spacing:-0.3px;">62160</div>
<div class="t" style="left:1062px;top:505.15px;font-size:14px;line-height:14px;color:#212121;font-weight:normal;letter-spacing:-0.15px;">70-11641988</div>
<div class="t" style="left:1265px;top:503.65px;font-size:14px;line-height:14px;color:#1d5c66;font-weight:normal;letter-spacing:0px;">_</div>
<div class="r" style="left:821px;top:525px;width:730px;height:1px;background:#dcdce0"></div>
<div class="t" style="left:852px;top:533.15px;font-size:14px;line-height:14px;color:#212121;font-weight:normal;letter-spacing:-0.3px;">Lot</div>
<div class="t" style="left:971.5px;top:533.15px;font-size:14px;line-height:14px;color:#212121;font-weight:normal;letter-spacing:-0.3px;">62160</div>
<div class="t" style="left:1062px;top:533.15px;font-size:14px;line-height:14px;color:#212121;font-weight:normal;letter-spacing:-0.15px;">70-11642119</div>
<div class="t" style="left:1265px;top:531.65px;font-size:14px;line-height:14px;color:#1d5c66;font-weight:normal;letter-spacing:0px;">_</div>
<div class="r" style="left:821px;top:553px;width:730px;height:1px;background:#dcdce0"></div>
<div class="t" style="left:852px;top:561.15px;font-size:14px;line-height:14px;color:#212121;font-weight:normal;letter-spacing:-0.3px;">Lot</div>
<div class="t" style="left:971.5px;top:561.15px;font-size:14px;line-height:14px;color:#212121;font-weight:normal;letter-spacing:-0.3px;">62160</div>
<div class="t" style="left:1062px;top:561.15px;font-size:14px;line-height:14px;color:#212121;font-weight:normal;letter-spacing:-0.15px;">70-11642541</div>
<div class="t" style="left:1265px;top:559.65px;font-size:14px;line-height:14px;color:#1d5c66;font-weight:normal;letter-spacing:0px;">_</div>
<div class="r" style="left:821px;top:581px;width:730px;height:1px;background:#dcdce0"></div>
<div class="t" style="left:852px;top:589.15px;font-size:14px;line-height:14px;color:#212121;font-weight:normal;letter-spacing:-0.3px;">Lot</div>
<div class="t" style="left:971.5px;top:589.15px;font-size:14px;line-height:14px;color:#212121;font-weight:normal;letter-spacing:-0.3px;">62160</div>
<div class="t" style="left:1062px;top:589.15px;font-size:14px;line-height:14px;color:#212121;font-weight:normal;letter-spacing:-0.15px;">70-11642661</div>
<div class="t" style="left:1265px;top:587.65px;font-size:14px;line-height:14px;color:#1d5c66;font-weight:normal;letter-spacing:0px;">_</div>
<div class="r" style="left:821px;top:609px;width:730px;height:1px;background:#dcdce0"></div>
<div class="t" style="left:852px;top:617.15px;font-size:14px;line-height:14px;color:#212121;font-weight:normal;letter-spacing:-0.3px;">Lot</div>
<div class="t" style="left:971.5px;top:617.15px;font-size:14px;line-height:14px;color:#212121;font-weight:normal;letter-spacing:-0.3px;">62160</div>
<div class="t" style="left:1062px;top:617.15px;font-size:14px;line-height:14px;color:#212121;font-weight:normal;letter-spacing:-0.15px;">70-11642699</div>
<div class="t" style="left:1265px;top:615.65px;font-size:14px;line-height:14px;color:#1d5c66;font-weight:normal;letter-spacing:0px;">_</div>
<div class="r" style="left:821px;top:637px;width:730px;height:1px;background:#dcdce0"></div>
<div class="t" style="left:852px;top:645.15px;font-size:14px;line-height:14px;color:#212121;font-weight:normal;letter-spacing:-0.3px;">Lot</div>
<div class="t" style="left:971.5px;top:645.15px;font-size:14px;line-height:14px;color:#212121;font-weight:normal;letter-spacing:-0.3px;">62160</div>
<div class="t" style="left:1062px;top:645.15px;font-size:14px;line-height:14px;color:#212121;font-weight:normal;letter-spacing:-0.15px;">70-11642702</div>
<div class="t" style="left:1265px;top:643.65px;font-size:14px;line-height:14px;color:#1d5c66;font-weight:normal;letter-spacing:0px;">_</div>
<div class="r" style="left:821px;top:665px;width:730px;height:1px;background:#dcdce0"></div>
<div class="t" style="left:852px;top:673.15px;font-size:14px;line-height:14px;color:#212121;font-weight:normal;letter-spacing:-0.3px;">Lot</div>
<div class="t" style="left:971.5px;top:673.15px;font-size:14px;line-height:14px;color:#212121;font-weight:normal;letter-spacing:-0.3px;">62160</div>
<div class="t" style="left:1062px;top:673.15px;font-size:14px;line-height:14px;color:#212121;font-weight:normal;letter-spacing:-0.15px;">70-11643110</div>
<div class="t" style="left:1265px;top:671.65px;font-size:14px;line-height:14px;color:#1d5c66;font-weight:normal;letter-spacing:0px;">_</div>
<div class="r" style="left:821px;top:693px;width:730px;height:1px;background:#dcdce0"></div>
<div class="t" style="left:852px;top:701.15px;font-size:14px;line-height:14px;color:#212121;font-weight:normal;letter-spacing:-0.3px;">Lot</div>
<div class="t" style="left:971.5px;top:701.15px;font-size:14px;line-height:14px;color:#212121;font-weight:normal;letter-spacing:-0.3px;">62160</div>
<div class="t" style="left:1062px;top:701.15px;font-size:14px;line-height:14px;color:#212121;font-weight:normal;letter-spacing:-0.15px;">70-11643236</div>
<div class="t" style="left:1265px;top:699.65px;font-size:14px;line-height:14px;color:#1d5c66;font-weight:normal;letter-spacing:0px;">_</div>
<div class="r" style="left:821px;top:721px;width:730px;height:1px;background:#dcdce0"></div>
<div class="t" style="left:852px;top:729.15px;font-size:14px;line-height:14px;color:#212121;font-weight:normal;letter-spacing:-0.3px;">Lot</div>
<div class="t" style="left:971.5px;top:729.15px;font-size:14px;line-height:14px;color:#212121;font-weight:normal;letter-spacing:-0.3px;">62160</div>
<div class="t" style="left:1062px;top:729.15px;font-size:14px;line-height:14px;color:#212121;font-weight:normal;letter-spacing:-0.15px;">70-11643257</div>
<div class="t" style="left:1265px;top:727.65px;font-size:14px;line-height:14px;color:#1d5c66;font-weight:normal;letter-spacing:0px;">_</div>
<div class="r" style="left:821px;top:749px;width:730px;height:1px;background:#dcdce0"></div>
<div class="t" style="left:852px;top:757.15px;font-size:14px;line-height:14px;color:#212121;font-weight:normal;letter-spacing:-0.3px;">Lot</div>
<div class="t" style="left:971.5px;top:757.15px;font-size:14px;line-height:14px;color:#212121;font-weight:normal;letter-spacing:-0.3px;">62160</div>
<div class="t" style="left:1062px;top:757.15px;font-size:14px;line-height:14px;color:#212121;font-weight:normal;letter-spacing:-0.15px;">70-11643319</div>
<div class="t" style="left:1265px;top:755.65px;font-size:14px;line-height:14px;color:#1d5c66;font-weight:normal;letter-spacing:0px;">_</div>
<div class="r" style="left:821px;top:777px;width:730px;height:1px;background:#dcdce0"></div>
<div class="t" style="left:852px;top:785.15px;font-size:14px;line-height:14px;color:#212121;font-weight:normal;letter-spacing:-0.3px;">Lot</div>
<div class="t" style="left:971.5px;top:785.15px;font-size:14px;line-height:14px;color:#212121;font-weight:normal;letter-spacing:-0.3px;">62160</div>
<div class="t" style="left:1062px;top:785.15px;font-size:14px;line-height:14px;color:#212121;font-weight:normal;letter-spacing:-0.15px;">70-11643969</div>
<div class="t" style="left:1265px;top:783.65px;font-size:14px;line-height:14px;color:#1d5c66;font-weight:normal;letter-spacing:0px;">_</div>
<div class="r" style="left:821px;top:805px;width:730px;height:1px;background:#dcdce0"></div>
<div class="t" style="left:852px;top:813.15px;font-size:14px;line-height:14px;color:#212121;font-weight:normal;letter-spacing:-0.3px;">Lot</div>
<div class="t" style="left:971.5px;top:813.15px;font-size:14px;line-height:14px;color:#212121;font-weight:normal;letter-spacing:-0.3px;">62160</div>
<div class="t" style="left:1062px;top:813.15px;font-size:14px;line-height:14px;color:#212121;font-weight:normal;letter-spacing:-0.15px;">70-11644069</div>
<div class="t" style="left:1265px;top:811.65px;font-size:14px;line-height:14px;color:#1d5c66;font-weight:normal;letter-spacing:0px;">_</div>
<div class="r" style="left:821px;top:833px;width:730px;height:1px;background:#dcdce0"></div>
<div class="t" style="left:852px;top:841.15px;font-size:14px;line-height:14px;color:#212121;font-weight:normal;letter-spacing:-0.3px;">Lot</div>
<div class="t" style="left:971.5px;top:841.15px;font-size:14px;line-height:14px;color:#212121;font-weight:normal;letter-spacing:-0.3px;">62160</div>
<div class="t" style="left:1062px;top:841.15px;font-size:14px;line-height:14px;color:#212121;font-weight:normal;letter-spacing:-0.15px;">70-11644191</div>
<div class="t" style="left:1265px;top:839.65px;font-size:14px;line-height:14px;color:#1d5c66;font-weight:normal;letter-spacing:0px;">_</div>
<div class="r" style="left:821px;top:861px;width:730px;height:1px;background:#dcdce0"></div>
<div class="t" style="left:852px;top:869.15px;font-size:14px;line-height:14px;color:#212121;font-weight:normal;letter-spacing:-0.3px;">Lot</div>
<div class="t" style="left:971.5px;top:869.15px;font-size:14px;line-height:14px;color:#212121;font-weight:normal;letter-spacing:-0.3px;">62160</div>
<div class="t" style="left:1062px;top:869.15px;font-size:14px;line-height:14px;color:#212121;font-weight:normal;letter-spacing:-0.15px;">70-11644490</div>
<div class="t" style="left:1265px;top:867.65px;font-size:14px;line-height:14px;color:#1d5c66;font-weight:normal;letter-spacing:0px;">_</div>
<div class="r" style="left:821px;top:889px;width:730px;height:1px;background:#dcdce0"></div>
<div class="t" style="left:852px;top:897.15px;font-size:14px;line-height:14px;color:#212121;font-weight:normal;letter-spacing:-0.3px;">Lot</div>
<div class="t" style="left:971.5px;top:897.15px;font-size:14px;line-height:14px;color:#212121;font-weight:normal;letter-spacing:-0.3px;">62160</div>
<div class="t" style="left:1062px;top:897.15px;font-size:14px;line-height:14px;color:#212121;font-weight:normal;letter-spacing:-0.15px;">70-11644600</div>
<div class="t" style="left:1265px;top:895.65px;font-size:14px;line-height:14px;color:#1d5c66;font-weight:normal;letter-spacing:0px;">_</div>
<div class="r" style="left:821px;top:917px;width:730px;height:1px;background:#dcdce0"></div>
<div class="t" style="left:852px;top:925.15px;font-size:14px;line-height:14px;color:#212121;font-weight:normal;letter-spacing:-0.3px;">Lot</div>
<div class="t" style="left:971.5px;top:925.15px;font-size:14px;line-height:14px;color:#212121;font-weight:normal;letter-spacing:-0.3px;">62160</div>
<div class="t" style="left:1062px;top:925.15px;font-size:14px;line-height:14px;color:#212121;font-weight:normal;letter-spacing:-0.15px;">70-11644614</div>
<div class="t" style="left:1265px;top:923.65px;font-size:14px;line-height:14px;color:#1d5c66;font-weight:normal;letter-spacing:0px;">_</div>
<div class="r" style="left:821px;top:945px;width:730px;height:1px;background:#dcdce0"></div>
<div class="t" style="left:852px;top:953.15px;font-size:14px;line-height:14px;color:#212121;font-weight:normal;letter-spacing:-0.3px;">Lot</div>
<div class="t" style="left:971.5px;top:953.15px;font-size:14px;line-height:14px;color:#212121;font-weight:normal;letter-spacing:-0.3px;">62160</div>
<div class="t" style="left:1062px;top:953.15px;font-size:14px;line-height:14px;color:#212121;font-weight:normal;letter-spacing:-0.15px;">70-11644796</div>
<div class="t" style="left:1265px;top:951.65px;font-size:14px;line-height:14px;color:#1d5c66;font-weight:normal;letter-spacing:0px;">_</div>
<div class="r" style="left:821px;top:973px;width:730px;height:1px;background:#dcdce0"></div>
<div class="t" style="left:852px;top:981.15px;font-size:14px;line-height:14px;color:#212121;font-weight:normal;letter-spacing:-0.3px;">Lot</div>
<div class="t" style="left:971.5px;top:981.15px;font-size:14px;line-height:14px;color:#212121;font-weight:normal;letter-spacing:-0.3px;">62160</div>
<div class="t" style="left:1062px;top:981.15px;font-size:14px;line-height:14px;color:#212121;font-weight:normal;letter-spacing:-0.15px;">70-11644805</div>
<div class="t" style="left:1265px;top:979.65px;font-size:14px;line-height:14px;color:#1d5c66;font-weight:normal;letter-spacing:0px;">_</div>
<div class="r" style="left:821px;top:1001px;width:730px;height:1px;background:#dcdce0"></div>
<div class="t" style="left:852px;top:1009.15px;font-size:14px;line-height:14px;color:#212121;font-weight:normal;letter-spacing:-0.3px;">Lot</div>
<div class="t" style="left:971.5px;top:1009.15px;font-size:14px;line-height:14px;color:#212121;font-weight:normal;letter-spacing:-0.3px;">62160</div>
<div class="t" style="left:1062px;top:1009.15px;font-size:14px;line-height:14px;color:#212121;font-weight:normal;letter-spacing:-0.15px;">70-11645178</div>
<div class="t" style="left:1265px;top:1007.65px;font-size:14px;line-height:14px;color:#1d5c66;font-weight:normal;letter-spacing:0px;">_</div>
<div class="r" style="left:821px;top:1029px;width:730px;height:1px;background:#dcdce0"></div>
<div class="t" style="left:852px;top:1037.15px;font-size:14px;line-height:14px;color:#212121;font-weight:normal;letter-spacing:-0.3px;">Lot</div>
<div class="t" style="left:971.5px;top:1037.15px;font-size:14px;line-height:14px;color:#212121;font-weight:normal;letter-spacing:-0.3px;">62160</div>
<div class="t" style="left:1062px;top:1037.15px;font-size:14px;line-height:14px;color:#212121;font-weight:normal;letter-spacing:-0.15px;">70-11645209</div>
<div class="t" style="left:1265px;top:1035.65px;font-size:14px;line-height:14px;color:#1d5c66;font-weight:normal;letter-spacing:0px;">_</div>
<div class="r" style="left:821px;top:1057px;width:730px;height:1px;background:#dcdce0"></div>
<div class="t" style="left:852px;top:1065.15px;font-size:14px;line-height:14px;color:#212121;font-weight:normal;letter-spacing:-0.3px;text-decoration:underline;">Lot</div>
<div class="t" style="left:971.5px;top:1065.15px;font-size:14px;line-height:14px;color:#212121;font-weight:normal;letter-spacing:-0.3px;">62160</div>
<div class="t" style="left:1062px;top:1065.15px;font-size:14px;line-height:14px;color:#212121;font-weight:normal;letter-spacing:-0.15px;">70-11645212</div>
<div class="t" style="left:1265px;top:1063.65px;font-size:14px;line-height:14px;color:#1d5c66;font-weight:normal;letter-spacing:0px;">_</div>
<div class="r" style="left:821px;top:1085px;width:730px;height:1px;background:#dcdce0"></div>
<div class="r" style="left:821px;top:195px;width:1px;height:890px;background:#dcdce0"></div>
<div class="r" style="left:845px;top:195px;width:1px;height:890px;background:#dcdce0"></div>
<div class="r" style="left:935px;top:195px;width:1px;height:890px;background:#dcdce0"></div>
<div class="r" style="left:965px;top:195px;width:1px;height:890px;background:#dcdce0"></div>
<div class="r" style="left:1055px;top:195px;width:1px;height:890px;background:#dcdce0"></div>
<div class="r" style="left:1157px;top:195px;width:1px;height:890px;background:#dcdce0"></div>
<div class="r" style="left:1259px;top:195px;width:1px;height:890px;background:#dcdce0"></div>
<div class="r" style="left:1451px;top:195px;width:1px;height:890px;background:#dcdce0"></div>
<div class="r" style="left:1541px;top:195px;width:1px;height:890px;background:#dcdce0"></div>
<svg class="r" style="left:948.5px;top:197px" width="5" height="15"><circle cx="2.5" cy="2" r="1.05" fill="#222"/><circle cx="2.5" cy="7.5" r="1.05" fill="#222"/><circle cx="2.5" cy="13" r="1.05" fill="#222"/></svg>
<svg class="r" style="left:948px;top:1065px" width="5" height="15"><circle cx="2.5" cy="2" r="1.05" fill="#222"/><circle cx="2.5" cy="7.5" r="1.05" fill="#222"/><circle cx="2.5" cy="13" r="1.05" fill="#222"/></svg>
<svg class="r" style="left:827px;top:1066px" width="14" height="11"><path d="M0 5.5h12.5M7.5 0.8l4.8 4.7-4.8 4.7" fill="none" stroke="#333" stroke-width="1"/></svg>
<div class="r" style="left:821px;top:1086px;width:730px;height:17px;background:#f0f0f0"></div>
<div class="r" style="left:821px;top:1103px;width:730px;height:1.5px;background:#d6d6d6"></div>
<div class="r" style="left:838px;top:1089px;width:465px;height:13px;background:#c1c1c1"></div>
<svg class="r" style="left:826px;top:1091px" width="6" height="9"><path d="M5 0v8.5L0 4.25z" fill="#a3a3a3"/></svg>
<svg class="r" style="left:1275px;top:196px" width="21" height="26" viewBox="0 0 21 26"><path d="M6.5 15.3V3A1.65 1.65 0 0 1 9.8 3V6.6Q11.1 6 12.4 7.2Q13.8 6.6 15.4 7.8Q18.7 7.6 18.7 10V18.2Q18.7 24.3 11.6 24.3Q7.5 24.3 5.2 20.5L1.3 15Q1 13.3 3.2 13.4L6.5 15.3Z" fill="#fff" stroke="#181820" stroke-width="1.2" stroke-linejoin="round"/><path d="M9.6 6.5V11.4M12.4 7.2V11.4M15.4 7.9V11.6" stroke="#181820" stroke-width="1.1" stroke-linecap="round"/></svg>
</body></html>
